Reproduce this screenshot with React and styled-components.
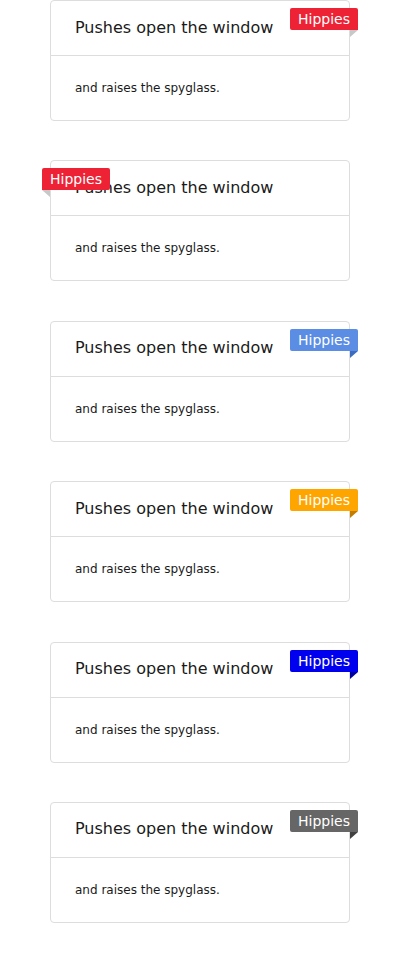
import styled, { createGlobalStyle } from "styled-components";

const GlobalStyle = createGlobalStyle`
  body {
    margin: 0;
    background: #fff;
    font-family: "DejaVu Sans", sans-serif;
  }
`;

const Page = styled.div`
  display: flex;
  flex-direction: column;
  align-items: center;
`;

const Card = styled.div`
  position: relative;
  width: 300px;
  box-sizing: border-box;
  border: 1px solid #ddd;
  border-radius: 4px;
  background: #fff;
  margin-bottom: 39.4px;
`;

const Header = styled.div`
  height: 55px;
  box-sizing: border-box;
  border-bottom: 1px solid #ddd;
  padding: 0 24px 2px;
  display: flex;
  align-items: center;
  font-size: 16px;
  color: #1a1a1a;
`;

const Body = styled.div`
  height: 64px;
  padding: 0 24px;
  display: flex;
  align-items: center;
  font-size: 12px;
  color: #1a1a1a;
`;

const Ribbon = styled.span`
  position: absolute;
  top: 7px;
  ${(p) => (p.$left ? "left: -9px;" : "right: -9px;")}
  height: 22px;
  line-height: 22px;
  padding: 0 8px;
  font-size: 14px;
  color: #fff;
  background: ${(p) => p.$color};
  border-radius: ${(p) => (p.$left ? "2px 2px 2px 0" : "2px 2px 0 2px")};

  &::after {
    content: "";
    position: absolute;
    top: 100%;
    ${(p) => (p.$left ? "left: 0;" : "right: 0;")}
    width: 0;
    height: 0;
    border-top: 7px solid ${(p) => p.$fold};
    ${(p) =>
      p.$left
        ? "border-left: 8px solid transparent;"
        : "border-right: 8px solid transparent;"}
  }
`;

const cards = [
  { color: "#ee2235", fold: "#c8c8c8" },
  { color: "#ee2235", fold: "#c8c8c8", left: true },
  { color: "#5a8de3", fold: "#3d6bbf" },
  { color: "#ffa500", fold: "#c27d00" },
  { color: "#0000ee", fold: "#0000a0" },
  { color: "#666666", fold: "#404040" },
];

export default function App() {
  return (
    <>
      <GlobalStyle />
      <Page>
        {cards.map((c, i) => (
          <Card key={i}>
            <Header>Pushes open the window</Header>
            <Body>and raises the spyglass.</Body>
            <Ribbon $color={c.color} $fold={c.fold} $left={c.left}>
              Hippies
            </Ribbon>
          </Card>
        ))}
      </Page>
    </>
  );
}
